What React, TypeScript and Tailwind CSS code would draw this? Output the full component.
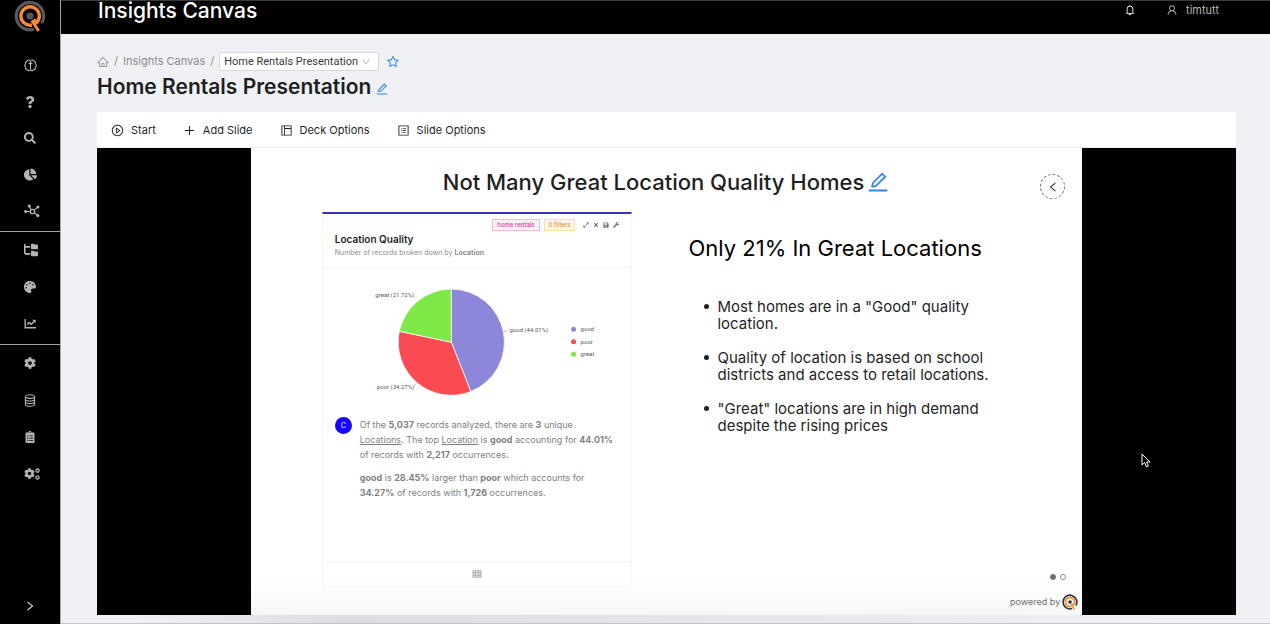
import React from 'react';
import {
  AiOutlineBell, AiOutlineDown, AiOutlineEdit, AiOutlineHome, AiOutlineLayout,
  AiOutlineLeft, AiOutlinePlayCircle, AiOutlinePlus, AiOutlineProfile,
  AiOutlineRight, AiOutlineStar, AiOutlineTable, AiOutlineUser
} from 'react-icons/ai';
import { FaChartPie, FaClipboardList, FaCog, FaPalette, FaQuestion, FaSave, FaSearch, FaTimes, FaWrench } from 'react-icons/fa';
import { FaFolderTree } from 'react-icons/fa6';

interface LogoProps {
  className?: string;
  ring: string;
}

interface NavItem {
  label: string;
  icon: React.ReactNode;
}

// Ring + Q mark, used in the sidebar and in the slide footer
const Logo: React.FC<LogoProps> = ({ className, ring }) => (
  <svg viewBox="0 0 32 32" fill="none" className={className} aria-hidden="true">
    <path d="M20 29.200A13.700 13.700 0 1 1 27.800 23" stroke={ring} strokeWidth="3.2" />
    <path d="M18 25A9.2 9.2 0 1 1 22.600 22.500L19.600 19.500" stroke="#f58a33" strokeWidth="3.4" strokeLinejoin="round" />
    <path d="M17.800 20.300L20.800 24.800L24.600 31" stroke="#f58a33" strokeWidth="3" />
    <circle cx="16" cy="16" r="3.6" fill={ring} />
  </svg>
);

const BrainIcon = () => (
  <svg viewBox="0 0 14 14" className="size-[13px]" fill="none" stroke="currentColor" strokeWidth="1.2">
    <path d="M6.3 1.600C5.200.6 3.600 1.200 3.300 2.400 1.900 2.900 1.400 4 1.700 5 .6 6 .6 8 1.700 9c-.2 1.400.7 2.400 1.900 2.500.6 1.200 2 1.300 2.700.6M7.700 1.600c1.100-1 2.700-.4 3 .8 1.400.5 1.900 1.600 1.600 2.600 1.100 1 1.100 3 0 4 .2 1.400-.7 2.400-1.900 2.500-.6 1.200-2 1.300-2.700.6" />
    <path d="M7 1.600v11M5 5.400L7 4l2 1.400" />
  </svg>
);

const NetworkIcon = () => (
  <svg viewBox="0 0 16 14" className="h-3.5 w-4" fill="none" stroke="currentColor" strokeWidth="1.1">
    <circle cx="8.5" cy="7.5" r="2.2" strokeWidth="1.3" />
    <path d="M2 7.500h4.300M5.500 2.500l1.800 3.200M13.500 3.200l-3.200 2.700M13.600 11.400l-3.300-2.400" />
    <g fill="currentColor" stroke="none">
      <circle cx="1.7" cy="7.5" r="1.5" />
      <circle cx="5.2" cy="2" r="1.6" />
      <circle cx="14" cy="3" r="1.5" />
      <circle cx="13.8" cy="11.6" r="1.6" />
    </g>
  </svg>
);

const TrendIcon = () => (
  <svg viewBox="0 0 14 12" className="h-[11px] w-[13px]" fill="none" stroke="currentColor" strokeWidth="1.5">
    <path d="M1.200 1v9.600H13" />
    <path d="M3.400 7.200l2.100-2.400 2.400 2 3.200-3.200" />
    <path d="M8.800 1.800h3.800v3.800z" fill="currentColor" stroke="none" />
  </svg>
);

const DatabaseIcon = () => (
  <svg viewBox="0 0 12 14" className="h-[13px] w-3" fill="none" stroke="currentColor" strokeWidth="1.1">
    <ellipse cx="6" cy="2.800" rx="5" ry="1.9" />
    <path d="M1 2.800v8.400c0 1 2.200 1.900 5 1.900s5-.9 5-1.900V2.800M1 5.600c0 1 2.200 1.900 5 1.900s5-.9 5-1.900M1 8.400c0 1 2.200 1.900 5 1.900s5-.9 5-1.900" />
  </svg>
);

const GearsIcon = () => (
  <span className="flex items-center">
    <FaCog className="size-[11px]" />
    <svg viewBox="0 0 5 12" className="h-3 w-[5px]" fill="none" stroke="currentColor" strokeWidth="1.3">
      <circle cx="2.5" cy="2.600" r="1.6" />
      <circle cx="2.5" cy="9.400" r="1.6" />
    </svg>
  </span>
);

const ExpandIcon = () => (
  <svg viewBox="0 0 8 8" className="size-1.5" fill="none" stroke="currentColor" strokeWidth="1">
    <path d="M1.400 6.600l5.200-5.200M4.500.9h2.600v2.600M3.500 7.100H.9V4.500" />
  </svg>
);

const exploreItems: NavItem[] = [
  { label: 'Insights', icon: <BrainIcon /> },
  { label: 'Help', icon: <FaQuestion className="size-3" /> },
  { label: 'Search', icon: <FaSearch className="size-3" /> },
  { label: 'Charts', icon: <FaChartPie className="size-[13px]" /> },
  { label: 'Network', icon: <NetworkIcon /> },
];

const contentItems: NavItem[] = [
  { label: 'Folders', icon: <FaFolderTree className="size-3.5" /> },
  { label: 'Canvas', icon: <FaPalette className="size-3" /> },
  { label: 'Trends', icon: <TrendIcon /> },
];

const adminItems: NavItem[] = [
  { label: 'Settings', icon: <FaCog className="size-3" /> },
  { label: 'Data', icon: <DatabaseIcon /> },
  { label: 'Reports', icon: <FaClipboardList className="size-3" /> },
  { label: 'Services', icon: <GearsIcon /> },
];

const NavGroup: React.FC<{ items: NavItem[]; className: string }> = ({ items, className }) => (
  <ul className={`flex flex-col ${className}`}>
    {items.map((item) => (
      <li key={item.label} className="flex flex-1">
        <a href="#" aria-label={item.label} className="flex flex-1 items-center pl-6 hover:text-white">
          {item.icon}
        </a>
      </li>
    ))}
  </ul>
);

const Sidebar = () => (
  <aside className="flex w-[61px] shrink-0 flex-col border-r border-[#a6a6a8] bg-black text-[#b4b4b4]">
    <a href="#" aria-label="Home" className="flex h-[47px] justify-center">
      <Logo className="size-8" ring="#58585a" />
    </a>
    <nav>
      <NavGroup items={exploreItems} className="h-[185px] border-b border-[#a6a6a8] pb-0.5" />
      <NavGroup items={contentItems} className="h-[113px] border-b border-[#a6a6a8] pb-0.5" />
      <NavGroup items={adminItems} className="h-[147px]" />
    </nav>
    <button aria-label="Expand menu" className="mt-auto flex h-9 items-center justify-center text-white">
      <AiOutlineRight className="size-3" />
    </button>
  </aside>
);

const Header = () => (
  <header className="flex h-[34px] items-start justify-between border-t border-[#3a3a3a] bg-black pr-[51px] pl-[37px] text-white">
    <h1 className="text-[21px] leading-5 font-medium">Insights Canvas</h1>
    <div className="flex h-[18px] items-center gap-[30px] text-[11px]">
      <button aria-label="Notifications"><AiOutlineBell className="size-3" /></button>
      <a href="#" className="flex items-center gap-2 text-[#b4b4b4]">
        <AiOutlineUser className="size-3" />
        timtutt
      </a>
    </div>
  </header>
);

const slices = [
  { name: 'good', share: 0.4401, color: '#8c87d9' },
  { name: 'poor', share: 0.3427, color: '#fb4b52' },
  { name: 'great', share: 0.2172, color: '#7de846' },
];

const CX = 128;
const CY = 74;
const R = 53;

const pointAt = (share: number) => {
  const angle = share * Math.PI * 2;
  return `${CX + R * Math.sin(angle)} ${CY - R * Math.cos(angle)}`;
};

const PieChart = () => {
  let start = 0;
  return (
    <svg viewBox="0 0 308 143" className="w-full font-[Roboto,sans-serif] text-[6px]" role="img" aria-label="Location Quality">
      {slices.map((slice) => {
        const from = start;
        start += slice.share;
        return (
          <path
            key={slice.name}
            d={`M${CX} ${CY}L${pointAt(from)}A${R} ${R} 0 0 1 ${pointAt(start)}Z`}
            fill={slice.color}
            stroke="#fff"
            strokeWidth="0.8"
          />
        );
      })}
      <g fill="none" strokeWidth="0.5">
        <path d="M180.500 63.500l4-.8" stroke="#8c87d9" />
        <path d="M94 31l-3-3" stroke="#7de846" />
        <path d="M93.500 115l-3 3" stroke="#fb4b52" />
      </g>
      <g fill="#595959">
        <text x="186" y="64">good (44.01%)</text>
        <text x="91" y="29" textAnchor="end">great (21.72%)</text>
        <text x="91" y="121" textAnchor="end">poor (34.27%)</text>
        {slices.map((slice, i) => (
          <g key={slice.name}>
            <circle cx="250" cy={61 + i * 12.5} r="2.5" fill={slice.color} />
            <text x="257" y={63 + i * 12.5}>{slice.name}</text>
          </g>
        ))}
      </g>
    </svg>
  );
};

const InsightCard = () => (
  <article className="flex min-h-[375px] flex-col border border-t-2 border-[#f5f5f5] border-t-[#3a32b4]">
    <header className="border-b border-[#f3f3f3] px-3 pt-[5px] pb-2">
      <div className="flex items-center justify-end gap-1 text-[6px] leading-[10px] font-medium">
        <span className="border border-[#f7b5da] bg-[#fff0f6] px-1 text-[#d03c94]">home rentals</span>
        <span className="border border-[#fbdfa8] bg-[#fff7e6] px-1 text-[#e08a3c]">0 filters</span>
        <div className="flex items-center gap-1 pl-1 text-[#6f6f7a]">
          <button aria-label="Expand"><ExpandIcon /></button>
          <button aria-label="Remove"><FaTimes className="size-1.5" /></button>
          <button aria-label="Save"><FaSave className="size-1.5" /></button>
          <button aria-label="Configure"><FaWrench className="size-1.5" /></button>
        </div>
      </div>
      <h3 className="text-[10px] leading-4 font-semibold text-[#1f1f1f]">Location Quality</h3>
      <p className="text-[7px] leading-3 text-[#8c8c8c]">
        Number of records broken down by <b className="font-bold">Location</b>
      </p>
    </header>
    <PieChart />
    <div className="flex gap-2 px-3 pt-1.5">
      <span className="flex size-[17px] shrink-0 items-center justify-center rounded-full bg-[#1404ff] text-[7px] text-white">C</span>
      <div className="flex flex-1 flex-col gap-2 text-[9px] leading-[15px] text-[#7f7f7f]">
        <p>
          Of the <b>5,037</b> records analyzed, there are <b>3</b> unique <br />
          <u>Locations</u>. The top <u>Location</u> is <b>good</b> accounting for <b>44.01%</b> of records with{' '}
          <b>2,217</b> occurrences.
        </p>
        <p>
          <b>good</b> is <b>28.45%</b> larger than <b>poor</b> which accounts for <br />
          <b>34.27%</b> of records with <b>1,726</b> occurrences.
        </p>
      </div>
    </div>
    <footer className="mt-auto flex h-[25px] items-center justify-center border-t border-[#f3f3f3] text-[#8c8c8c]">
      <button aria-label="Show data"><AiOutlineTable className="size-2.5" /></button>
    </footer>
  </article>
);

const bullets = [
  'Most homes are in a "Good" quality location.',
  'Quality of location is based on school districts and access to retail locations.',
  '"Great" locations are in high demand despite the rising prices',
];

const Slide = () => (
  <section className="relative w-[73%] bg-linear-to-b from-white from-92% to-[#f7f7f7] px-[71px] pt-5 pb-7">
    <h2 className="flex items-center justify-center gap-0.5 text-[22px] leading-7 font-medium text-[#1f1f1f]">
      Not Many Great Location Quality Homes
      <button aria-label="Edit slide title" className="text-[#2f86eb]"><AiOutlineEdit className="size-6" /></button>
    </h2>
    <div className="mt-4 grid grid-cols-[310fr_322fr] gap-14">
      <InsightCard />
      <div className="pt-5 text-[#1f1f1f]">
        <h3 className="text-[22px] leading-8 text-black">Only 21% In Great Locations</h3>
        <ul className="mt-[34px] flex flex-col gap-[17px] pl-4 text-[15px] leading-[17px]">
          {bullets.map((bullet) => (
            <li key={bullet} className="flex gap-2 pr-3 before:mt-1.5 before:size-[5px] before:shrink-0 before:rounded-full before:bg-[#1f1f1f]">
              {bullet}
            </li>
          ))}
        </ul>
      </div>
    </div>
    <button
      aria-label="Previous slide"
      className="absolute top-[26px] right-[17px] flex size-[25px] items-center justify-center rounded-full border border-dashed border-[#6f6f6f] text-[#1f1f1f]"
    >
      <AiOutlineLeft className="size-3" />
    </button>
    <div className="absolute right-1 bottom-[5px] flex flex-col items-end gap-3.5">
      <div className="flex gap-1 pr-3">
        <button aria-label="Slide 1" className="size-1.5 rounded-full border border-[#6f6f6f] bg-[#6f6f6f]" />
        <button aria-label="Slide 2" className="size-1.5 rounded-full border border-[#8c8c8c]" />
      </div>
      <p className="flex items-center gap-0.5 text-[9px] leading-4 text-[#6f6f6f]">
        powered by
        <Logo className="size-4" ring="#26323f" />
      </p>
    </div>
  </section>
);

const toolbarItems = [
  { label: 'Start', icon: <AiOutlinePlayCircle className="size-[13px]" /> },
  { label: 'Add Slide', icon: <AiOutlinePlus className="size-[13px]" /> },
  { label: 'Deck Options', icon: <AiOutlineLayout className="size-[13px]" /> },
  { label: 'Slide Options', icon: <AiOutlineProfile className="size-[13px]" /> },
];

export default function App() {
  return (
    <div className="relative flex min-h-screen bg-[#f0f1f5] font-[Inter,sans-serif]">
      <Sidebar />
      <div className="flex min-w-0 flex-1 flex-col">
        <Header />
        <main className="flex flex-1 flex-col pt-[18px] pr-[34px] pl-9">
          <nav aria-label="Breadcrumb" className="flex h-[19px] items-center gap-[5px] text-[11px] text-[#8c8c8c]">
            <a href="#" aria-label="Home"><AiOutlineHome className="size-3" /></a>
            <span>/</span>
            <a href="#">Insights Canvas</a>
            <span>/</span>
            <div className="relative flex items-center text-[#3a3a3a]">
              <select
                aria-label="Presentation"
                className="h-[19px] w-40 appearance-none rounded-xs border border-[#d9d9d9] bg-white pl-1 font-[Roboto,sans-serif] leading-4"
              >
                <option>Home Rentals Presentation</option>
              </select>
              <AiOutlineDown className="pointer-events-none absolute right-2 size-2.5 text-[#a6a6a8]" />
            </div>
            <button aria-label="Favourite" className="pl-0.5 text-[#2f86eb]"><AiOutlineStar className="size-3.5" /></button>
          </nav>
          <h2 className="mt-0.5 flex items-center gap-1 text-[21px] leading-7 font-semibold text-[#1f1f1f]">
            Home Rentals Presentation
            <button aria-label="Edit title" className="pt-1 text-[#2f86eb]"><AiOutlineEdit className="size-3.5" /></button>
          </h2>
          <div role="toolbar" className="mt-[11px] flex h-9 items-center gap-[27px] border-b border-[#f0f0f0] bg-white px-[14px] pt-0.5 text-[11px] text-[#1f1f1f]">
            {toolbarItems.map((item) => (
              <button key={item.label} className="flex items-center gap-[7px]">
                {item.icon}
                {item.label}
              </button>
            ))}
          </div>
          <div className="flex flex-1 justify-center bg-black">
            <Slide />
          </div>
        </main>
        <div className="h-[9px] border-b border-[#c4c4c8] pr-[105px] pl-[75px]">
          <div className="h-full bg-linear-to-r from-transparent via-[#dcdde1] via-20% to-transparent" />
        </div>
      </div>
      {/* mouse pointer resting over the deck */}
      <svg viewBox="0 0 10 15" className="pointer-events-none absolute top-[453px] left-[1141px] h-[15px] w-2.5" aria-hidden="true">
        <path d="M1 1v11l2.600-2.400 1.800 4.300 2-.9-1.800-4H9z" fill="#000" stroke="#fff" strokeWidth="1" />
      </svg>
    </div>
  );
}
